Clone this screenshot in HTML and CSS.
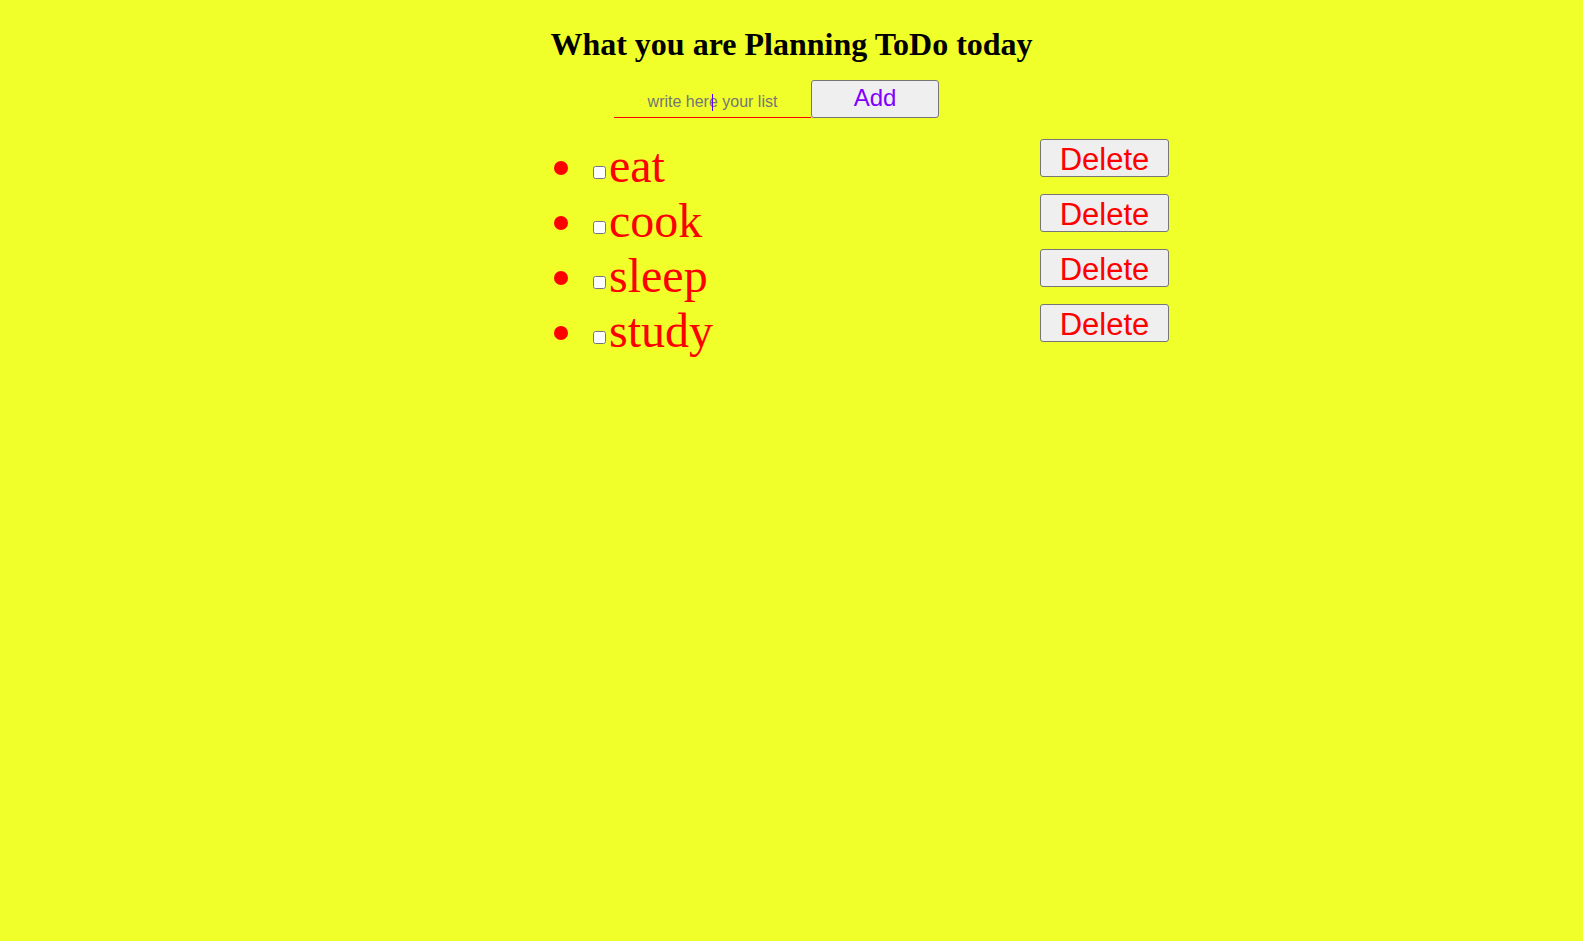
FILE: index.html
```html
<!DOCTYPE html>
<html lang="en">
<head>
<meta charset="utf-8">
<title>ToDo</title>
<link rel="stylesheet" href="styles.css">
</head>
<body>
  <h1 class="title">What you are Planning ToDo today</h1>
  <div class="entry">
    <span class="field">
      <input class="field-input" type="text" placeholder="write here your list">
    </span>
    <button class="add-btn">Add</button>
  </div>
  <ul class="todo-list">
    <li class="todo-item"><button class="del-btn">Delete</button><input class="todo-check" type="checkbox">eat</li>
    <li class="todo-item"><button class="del-btn">Delete</button><input class="todo-check" type="checkbox">cook</li>
    <li class="todo-item"><button class="del-btn">Delete</button><input class="todo-check" type="checkbox">sleep</li>
    <li class="todo-item"><button class="del-btn">Delete</button><input class="todo-check" type="checkbox">study</li>
  </ul>
</body>
</html>
```
FILE: styles.css
```css
html, body {
  margin: 0;
  padding: 0;
}
body {
  background: #f0ff29;
  font-family: "Liberation Serif", "Times New Roman", serif;
  min-height: 941px;
}
.title {
  margin: 26px 0 0;
  font-size: 32px;
  line-height: 37px;
  font-weight: bold;
  text-align: center;
  color: #000;
}
.entry {
  display: flex;
  justify-content: center;
  align-items: flex-end;
  margin-top: 17px;
  padding-right: 30px;
}
.field {
  position: relative;
  display: block;
  width: 197px;
  border-bottom: 1px solid #ff0000;
}
.field::after {
  content: "";
  position: absolute;
  left: 98px;
  top: 7px;
  width: 1px;
  height: 17px;
  background: #5a00ff;
}
.field-input {
  display: block;
  box-sizing: border-box;
  -webkit-appearance: none;
  appearance: none;
  width: 197px;
  height: 30px;
  margin: 0;
  padding: 0;
  border: 0;
  border-radius: 0;
  background: transparent;
  text-align: center;
  font-family: "Liberation Sans", Arial, sans-serif;
  font-size: 16px;
  color: #5a00ff;
  outline: none;
}
.field-input::placeholder {
  color: #757575;
}
.add-btn,
.del-btn {
  box-sizing: border-box;
  height: 38px;
  margin: 0;
  border: 1px solid #767676;
  border-radius: 3px;
  background: #efefef;
  font-family: "Liberation Sans", Arial, sans-serif;
  text-align: center;
}
.add-btn {
  width: 128px;
  padding: 0 0 2px;
  font-size: 24px;
  line-height: 34px;
  color: #8000ff;
}
.todo-list {
  margin: 20px 0 0 549px;
  padding: 0 0 0 40px;
  width: 580px;
  color: #ff0000;
}
.todo-item {
  font-size: 48px;
  line-height: 55px;
}
.del-btn {
  float: right;
  width: 129px;
  margin-top: 1px;
  padding: 5px 0 1px;
  font-size: 31px;
  line-height: 30px;
  color: #ff0000;
}
.todo-check {
  width: 13px;
  height: 13px;
  margin: 3px 3px 3px 4px;
  vertical-align: 3px;
}
```
